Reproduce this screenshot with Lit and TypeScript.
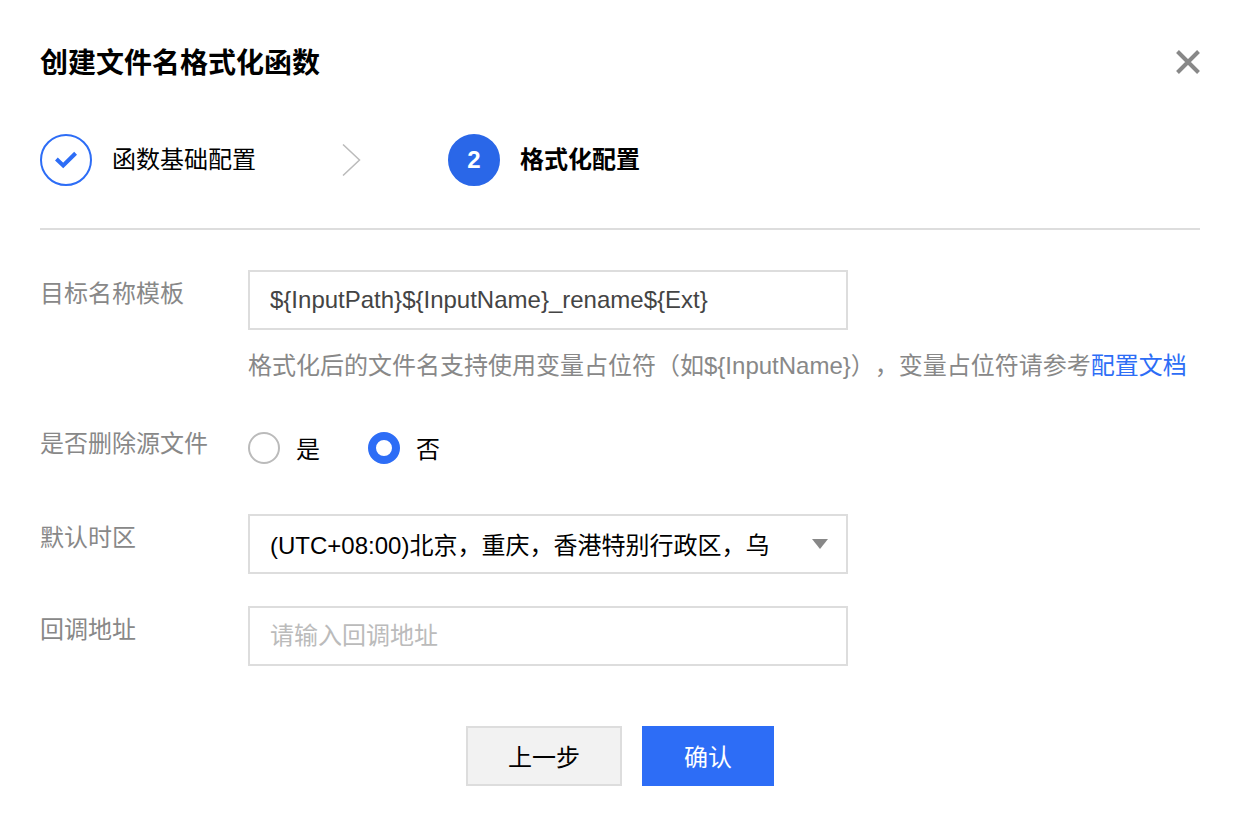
import { LitElement, html, css } from "lit";
import { customElement, state } from "lit/decorators.js";

@customElement("app-root")
export class AppRoot extends LitElement {
  static styles = css`
    :host {
      display: block;
      box-sizing: border-box;
      min-height: 100vh;
      padding: 40px 42px 38px 40px;
      background: #fff;
      color: #000;
      font-family: "Liberation Sans", "Noto Sans CJK SC", sans-serif;
      font-size: 24px;
      line-height: 36px;
      text-spacing-trim: space-all;
    }
    *,
    *::before {
      box-sizing: border-box;
    }
    .header {
      display: flex;
      align-items: center;
      justify-content: space-between;
    }
    .title {
      margin: 0;
      padding-top: 4px;
      font-size: 28px;
      line-height: 40px;
      font-weight: 700;
    }
    .close {
      display: flex;
      padding: 0;
      border: 0;
      background: none;
      color: #888;
      cursor: pointer;
    }
    .steps {
      display: flex;
      align-items: center;
      gap: 86px;
      margin: 50px 0 0;
      padding: 0 0 42px;
      border-bottom: 2px solid #ddd;
      list-style: none;
    }
    .step {
      display: flex;
      align-items: center;
      gap: 20px;
    }
    .mark {
      display: flex;
      align-items: center;
      justify-content: center;
      width: 52px;
      height: 52px;
      border: 2px solid #2d6df6;
      border-radius: 50%;
      color: #2d6df6;
    }
    .current {
      font-weight: 700;
    }
    .current .mark {
      background: #2a67e8;
      border-color: #2a67e8;
      color: #fff;
    }
    .arrow {
      display: flex;
      color: #bbb;
    }
    .form {
      display: flex;
      flex-direction: column;
      gap: 32px;
      padding-top: 40px;
    }
    .row {
      display: grid;
      grid-template-columns: 208px minmax(0, 1fr);
      align-items: start;
    }
    .label {
      padding: 6px 0 0;
      color: #888;
    }
    .control {
      display: block;
      width: 100%;
      max-width: 600px;
      height: 60px;
      margin: 0;
      padding: 0 20px;
      border: 2px solid #ddd;
      border-radius: 0;
      background: #fff;
      color: #000;
      font: inherit;
      outline: none;
    }
    input.control {
      color: #444;
    }
    .control::placeholder {
      color: #bbb;
      opacity: 1;
    }
    .control:focus-visible {
      border-color: #2d6df6;
    }
    .select {
      display: grid;
      max-width: 600px;
      align-items: center;
    }
    .select > * {
      grid-area: 1 / 1;
    }
    .select .control {
      appearance: none;
      padding: 4px 60px 0 20px;
    }
    .caret {
      justify-self: end;
      margin-right: 20px;
      color: #888;
      pointer-events: none;
    }
    .help {
      margin: 14px 0 0;
      color: #888;
      line-height: 44px;
    }
    .link {
      color: #2d6df6;
      text-decoration: none;
    }
    .radios {
      display: flex;
      gap: 48px;
      padding: 8px 0 14px;
    }
    .option {
      display: flex;
      align-items: center;
      gap: 16px;
    }
    .option-text {
      padding-top: 4px;
    }
    .radio {
      appearance: none;
      width: 32px;
      height: 32px;
      margin: 0;
      border: 2px solid #bbb;
      border-radius: 50%;
      background: #fff;
    }
    .radio:checked {
      border: 8px solid #2d6df6;
    }
    .footer {
      display: flex;
      justify-content: center;
      gap: 20px;
      padding-top: 60px;
    }
    .button {
      height: 60px;
      padding: 4px 40px 0;
      border: 2px solid #ddd;
      background: #f2f2f2;
      color: #000;
      font: inherit;
      cursor: pointer;
    }
    .primary {
      border-color: #2d6df6;
      background: #2d6df6;
      color: #fff;
    }
  `;

  @state() private removeSource = false;

  render() {
    return html`
      <header class="header">
        <h1 class="title">创建文件名格式化函数</h1>
        <button class="close" type="button" aria-label="关闭">
          <svg width="24" height="24" viewBox="0 0 24 24" fill="none" stroke="currentColor" stroke-width="4">
            <path d="M1.5 1.5L22.5 22.5M22.5 1.5L1.5 22.5" />
          </svg>
        </button>
      </header>
      <ol class="steps">
        <li class="step">
          <span class="mark">
            <svg width="24" height="20" viewBox="0 0 24 20" fill="none" stroke="currentColor" stroke-width="4">
              <path d="M2.4 9L9.2 15.4L21.6 3.2" />
            </svg>
          </span>
          <span>函数基础配置</span>
        </li>
        <li class="arrow" aria-hidden="true">
          <svg width="20" height="32" viewBox="0 0 20 32" fill="none" stroke="currentColor" stroke-width="1.5">
            <path d="M1 0.5L17.5 16L1 31.5" />
          </svg>
        </li>
        <li class="step current" aria-current="step">
          <span class="mark">2</span>
          <span>格式化配置</span>
        </li>
      </ol>
      <form @submit=${(e: Event) => e.preventDefault()}>
        <div class="form">
          <div class="row">
            <label class="label" for="template">目标名称模板</label>
            <div>
              <input
                class="control"
                id="template"
                type="text"
                spellcheck="false"
                .value=${"${InputPath}${InputName}_rename${Ext}"}
              />
              <p class="help">
                格式化后的文件名支持使用变量占位符（如${"${InputName}"}），变量占位符请参考<a class="link" href="#docs">配置文档</a>
              </p>
            </div>
          </div>
          <div class="row" role="radiogroup" aria-labelledby="remove-label">
            <span class="label" id="remove-label">是否删除源文件</span>
            <div class="radios">
              ${[true, false].map(
                (value) => html`
                  <label class="option">
                    <input
                      class="radio"
                      type="radio"
                      name="remove"
                      .checked=${this.removeSource === value}
                      @change=${() => (this.removeSource = value)}
                    />
                    <span class="option-text">${value ? "是" : "否"}</span>
                  </label>
                `
              )}
            </div>
          </div>
          <div class="row">
            <label class="label" for="zone">默认时区</label>
            <div class="select">
              <select class="control" id="zone">
                <option>(UTC+08:00)北京，重庆，香港特别行政区，乌</option>
              </select>
              <svg class="caret" width="16" height="10" viewBox="0 0 16 10" fill="currentColor">
                <path d="M0 0H16L8 10Z" />
              </svg>
            </div>
          </div>
          <div class="row">
            <label class="label" for="callback">回调地址</label>
            <input class="control" id="callback" type="text" placeholder="请输入回调地址" />
          </div>
        </div>
        <footer class="footer">
          <button class="button" type="button">上一步</button>
          <button class="button primary" type="submit">确认</button>
        </footer>
      </form>
    `;
  }
}
